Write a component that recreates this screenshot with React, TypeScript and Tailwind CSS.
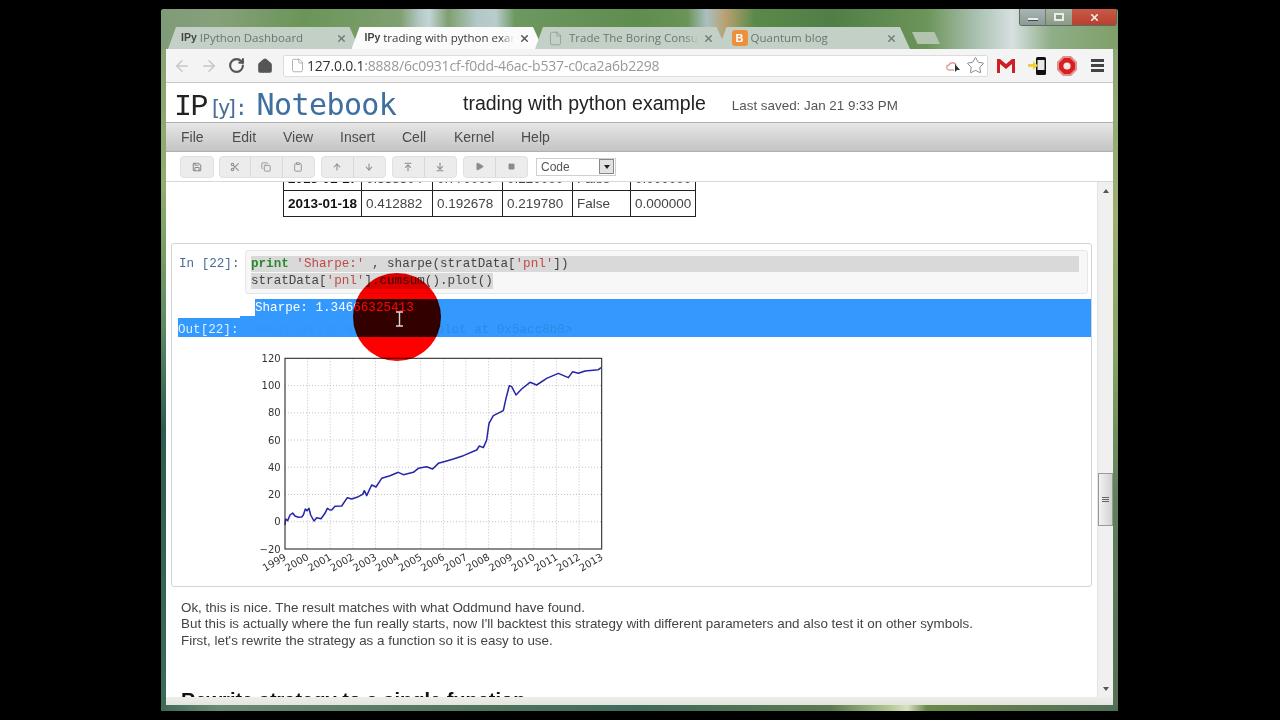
import { ArrowDown, ArrowLeft, ArrowRight, ArrowUp, Clipboard, Copy, File, Home, Play, RotateCw, Save, Scissors, Square, Star, X, ArrowUpToLine, ArrowDownToLine } from "lucide-react";

const tabs = [
  { title: "IPython Dashboard", active: false, icon: "ipy" },
  { title: "trading with python example", active: true, icon: "ipy" },
  { title: "Trade The Boring Consumer", active: false, icon: "file" },
  { title: "Quantum blog", active: false, icon: "blog" },
];

const menus = [
  { label: "File", w: "w-[51px]" },
  { label: "Edit", w: "w-[51px]" },
  { label: "View", w: "w-[57px]" },
  { label: "Insert", w: "w-[62px]" },
  { label: "Cell", w: "w-[52px]" },
  { label: "Kernel", w: "w-[67px]" },
  { label: "Help", w: "w-[50px]" },
];

const tableRows = [
  ["2013-01-17", "0.338504", "0.770000", "0.220000", "False", "0.000000"],
  ["2013-01-18", "0.412882", "0.192678", "0.219780", "False", "0.000000"],
];

const colWidths = ["w-[78px]", "w-[71px]", "w-[70px]", "w-[70px]", "w-[58px]", "w-[65px]"];

const years = ["1999", "2000", "2001", "2002", "2003", "2004", "2005", "2006", "2007", "2008", "2009", "2010", "2011", "2012", "2013"];
const yTicks = [120, 100, 80, 60, 40, 20, 0, -20];

// traced from the picture, in 3x plot coordinates
const pnlLine =
  "M105,540 L107,522 L113,527 L120,510 L128,504 L135,513 L145,517 L155,516 L160,510 L166,492 L171,497 L177,490 L182,510 L192,528 L200,518 L213,521 L225,505 L232,490 L238,494 L245,495 L255,484 L275,483 L292,458 L305,462 L325,455 L338,448 L343,437 L350,452 L365,420 L378,426 L395,400 L420,392 L445,382 L460,389 L490,382 L505,370 L530,365 L548,372 L565,355 L590,348 L610,342 L640,332 L680,315 L688,303 L700,308 L710,285 L717,235 L730,212 L760,197 L768,160 L778,122 L785,125 L798,150 L815,132 L840,112 L860,120 L890,100 L925,85 L955,98 L968,80 L985,85 L1005,78 L1045,74 L1053,68";

function Tab({ title, active, icon }: { title: string; active: boolean; icon: string }) {
  return (
    <div
      className={`w-[191.5px] h-[22px] -mr-[8px] flex items-center pl-[13px] pr-[13px] [clip-path:polygon(0_100%,8px_0,calc(100%-10px)_0,100%_100%)] ${
        active ? "bg-[#fbfbfb] text-[#3a3a3a]" : "bg-[#c3d0c6] text-[#6d756f]"
      }`}
    >
      {icon === "ipy" && <span className="text-[10.5px] font-bold text-[#444] mr-[3px]">IPy</span>}
      {icon === "file" && <File size={15} strokeWidth={1} className="text-[#888] mr-[6px] shrink-0" />}
      {icon === "blog" && (
        <span className="w-[16px] h-[16px] rounded-[3px] bg-[#ee8f3c] mr-[3px] shrink-0 flex items-center justify-center text-white text-[11px] font-bold">
          B
        </span>
      )}
      <span className="flex-1 whitespace-nowrap overflow-hidden text-[11.5px] font-['Open_Sans',sans-serif] [mask-image:linear-gradient(to_right,black_90%,transparent)]">
        {title}
      </span>
      <X size={11} strokeWidth={3} className={active ? "text-[#555] ml-[5px] shrink-0" : "text-[#777] ml-[5px] shrink-0"} />
    </div>
  );
}

function ToolButton({ children }: { children: React.ReactNode }) {
  return <div className="w-[31.5px] h-[20px] flex items-center justify-center text-[#8a8a8a] border-r border-[#d8d8d8] last:border-r-0">{children}</div>;
}

function ToolGroup({ children, ml }: { children: React.ReactNode; ml: string }) {
  return <div className={`${ml} flex rounded-[4px] border border-[#e0e0e0] bg-[#ececec]`}>{children}</div>;
}

function Plot() {
  return (
    <svg width="370" height="235" viewBox="0 0 1110 705" className="block ml-[78px] mt-[8px]">
      <rect x="105" y="40" width="950" height="572" fill="white" />
      {years.slice(1, -1).map((_, i) => {
        const x = 105 + (i + 1) * 67.86;
        return <line key={i} x1={x} x2={x} y1="40" y2="612" stroke="#b4b4b4" strokeWidth="2.4" strokeDasharray="3 6" />;
      })}
      {yTicks.slice(1, -1).map((t, i) => {
        const y = 40 + (i + 1) * 81.7;
        return <line key={t} x1="105" x2="1055" y1={y} y2={y} stroke="#b4b4b4" strokeWidth="2.4" strokeDasharray="3 6" />;
      })}
      <path d={pnlLine} fill="none" stroke="#2626a8" strokeWidth="4.6" strokeLinejoin="round" />
      <rect x="105" y="40" width="950" height="572" fill="none" stroke="#333" strokeWidth="3.4" />
      {yTicks.map((t, i) => (
        <text key={t} x="92" y={40 + i * 81.7 + 11} textAnchor="end" fontSize="30" fill="#333" fontFamily="'DejaVu Sans', sans-serif">
          {t < 0 ? `\u2212${-t}` : t}
        </text>
      ))}
      {years.map((y, i) => {
        const x = 105 + i * 67.86;
        return (
          <text key={y} x={x + 6} y="642" textAnchor="end" fontSize="30" fill="#333" fontFamily="'DejaVu Sans', sans-serif" transform={`rotate(-30 ${x + 6} 642)`}>
            {y}
          </text>
        );
      })}
    </svg>
  );
}

export default function App() {
  return (
    <div className="relative w-[1280px] h-[720px] bg-black overflow-hidden pl-[161px] pt-[9px] font-['Liberation_Sans',sans-serif]">
      <div className="w-[957px] h-[702px] px-[5px] flex flex-col rounded-t-[3px] [background:linear-gradient(#86a07a,#8fae6e_25%,#5f8a62_45%,#2f5c50_60%,#3f6a58_100%)_left/5px_100%_no-repeat,linear-gradient(#8aa47c,#9cb070_30%,#86a264_50%,#5f7f5a_70%,#566f56)_right/5px_100%_no-repeat]">
        {/* tab strip */}
        <div className="h-[40px] flex items-end shrink-0 -mx-[5px] pl-[7px] rounded-t-[3px] bg-[linear-gradient(90deg,#7f9c78_0%,#86a07a_6%,#6a9558_15%,#7fa070_25%,#b3c7c4_27%,#c3d4d6_28%,#7f9f70_30%,#b3c8c8_33%,#b9cccc_35%,#6d9860_37%,#5f8c4f_50%,#6a9458_55%,#a9c0c0_57%,#b8a070_59%,#5a8a4a_62%,#4f7f46_70%,#6c9458_80%,#a7bfae_85%,#d7e0e0_89%,#8fae88_93%,#7f9f68_100%)]">
          {tabs.map((t) => (
            <Tab key={t.title} {...t} />
          ))}
          <div className="ml-[10px] mb-[5px] w-[28px] h-[12px] bg-[#b3c4ae] [clip-path:polygon(0_0,80%_0,100%_100%,20%_100%)]" />
        </div>

        {/* chrome toolbar */}
        <div className="h-[34px] shrink-0 flex items-center bg-[#f4f4f4] border-b border-[#c8c8c8] pl-[7px]">
          <ArrowLeft size={18} strokeWidth={2} className="text-[#c4c8cc]" />
          <ArrowRight size={18} strokeWidth={2} className="text-[#c4c8cc] ml-[9px]" />
          <RotateCw size={17} strokeWidth={3} className="text-[#555] ml-[10px]" />
          <Home size={16} strokeWidth={2.5} className="text-[#555] fill-[#555] ml-[12px]" />
          <div className="ml-[10px] w-[705px] h-[22px] flex items-center bg-white border border-[#dcdcdc] rounded-[2px] pl-[6px] pr-[2px]">
            <File size={15} strokeWidth={1.2} className="text-[#999] shrink-0" />
            <span className="ml-[2px] text-[14px] font-['Open_Sans',sans-serif] tracking-[-0.2px] whitespace-nowrap text-[#999]">
              <span className="text-[#333]">127.0.0.1</span>:8888/6c0931cf-f0dd-46ac-b537-c0ca2a6b2298
            </span>
            <div className="flex-1" />
            <svg width="16" height="14" viewBox="0 0 16 14" className="mr-[5px]">
              <path d="M4 11 C1 11 1 6 4 6 C5 3 10 3 11 6" fill="none" stroke="#e09a96" strokeWidth="1.3" />
              <path d="M4 11 H9" stroke="#e09a96" strokeWidth="1.3" />
              <path d="M10 5 L10 13 L12 11 L15 11 Z" fill="#333" />
            </svg>
            <Star size={19} strokeWidth={1.1} className="text-[#777]" />
          </div>
          <svg width="18" height="14" viewBox="0 0 18 14" className="ml-[9px]">
            <path d="M0 0 H3 L9 5 L15 0 H18 V14 H15 V5 L9 10 L3 5 V14 H0 Z" fill="#cc1f26" />
          </svg>
          <svg width="22" height="18" viewBox="0 0 22 18" className="ml-[12px]">
            <rect x="9" y="0" width="10" height="18" rx="1.5" fill="#111" />
            <rect x="10.5" y="3" width="7" height="10" fill="#e8e8e8" />
            <path d="M1 7 H6 V4 L11 8.5 L6 13 V10 H1 Z" fill="#eed33e" />
          </svg>
          <svg width="20" height="20" viewBox="0 0 20 20" className="ml-[8px]">
            <polygon points="6,0 14,0 20,6 20,14 14,20 6,20 0,14 0,6" fill="#e09090" />
            <polygon points="7,2 13,2 18,7 18,13 13,18 7,18 2,13 2,7" fill="#d82020" />
            <circle cx="10" cy="10" r="3.6" fill="#f8e8e8" />
          </svg>
          <div className="ml-[14px] w-[13px] flex flex-col gap-[2px]">
            <div className="h-[3px] bg-[#444]" />
            <div className="h-[3px] bg-[#444]" />
            <div className="h-[3px] bg-[#444]" />
          </div>
        </div>

        {/* notebook header */}
        <div className="h-[39px] shrink-0 flex items-start bg-white pl-[8px]">
          <div className="mt-[7px] w-[289px] flex items-baseline">
            <span className="text-[30px] leading-none font-['Liberation_Mono',monospace] tracking-[-1.5px] text-[#222]">IP</span>
            <span className="ml-[2px] text-[21px] leading-none font-['DejaVu_Sans_Mono',monospace] tracking-[-4px] text-[#4a6f96]">[y]:</span>
            <span className="ml-[13px] text-[30px] leading-none font-['DejaVu_Sans_Mono',monospace] tracking-[-0.6px] text-[#3f6f9f]">Notebook</span>
          </div>
          <div className="mt-[11px] flex items-baseline">
            <span className="text-[19.5px] leading-none text-[#222]">trading with python example</span>
            <span className="ml-[26px] text-[13.4px] leading-none text-[#555]">Last saved: Jan 21 9:33 PM</span>
          </div>
        </div>

        {/* menu bar */}
        <div className="h-[30px] shrink-0 flex items-center pl-[15px] border-y border-[#b0b0b0] bg-[linear-gradient(#e6e6e6,#c4c4c4)] text-[14px] text-[#4c4c4c]">
          {menus.map((m) => (
            <span key={m.label} className={m.w}>
              {m.label}
            </span>
          ))}
        </div>

        {/* notebook toolbar */}
        <div className="h-[30px] shrink-0 flex items-center bg-white border-b border-[#d8d8d8] pl-[14px]">
          <ToolGroup ml="">
            <ToolButton><Save size={10} strokeWidth={2.5} /></ToolButton>
          </ToolGroup>
          <ToolGroup ml="ml-[5px]">
            <ToolButton><Scissors size={10} strokeWidth={2.5} /></ToolButton>
            <ToolButton><Copy size={10} strokeWidth={2} /></ToolButton>
            <ToolButton><Clipboard size={10} strokeWidth={2} /></ToolButton>
          </ToolGroup>
          <ToolGroup ml="ml-[6px]">
            <ToolButton><ArrowUp size={10} strokeWidth={2.5} /></ToolButton>
            <ToolButton><ArrowDown size={10} strokeWidth={2.5} /></ToolButton>
          </ToolGroup>
          <ToolGroup ml="ml-[6px]">
            <ToolButton><ArrowUpToLine size={10} strokeWidth={2.5} /></ToolButton>
            <ToolButton><ArrowDownToLine size={10} strokeWidth={2.5} /></ToolButton>
          </ToolGroup>
          <ToolGroup ml="ml-[6px]">
            <ToolButton><Play size={9} fill="currentColor" /></ToolButton>
            <ToolButton><Square size={7} fill="currentColor" /></ToolButton>
          </ToolGroup>
          <div className="ml-[8px] w-[80px] h-[18px] flex items-center justify-between border border-[#cfcfcf] bg-white pl-[4px] pr-[1px] text-[12px] text-[#555]">
            Code
            <div className="w-[15px] h-[15px] flex items-center justify-center border border-[#888] bg-[#e2e2e2]">
              <div className="w-0 h-0 border-x-[3px] border-x-transparent border-t-[4px] border-t-[#222]" />
            </div>
          </div>
        </div>

        {/* page */}
        <div className="flex-1 min-h-0 flex bg-white">
          <div className="flex-1 min-w-0 overflow-hidden pl-[5px]">
            <table className="-mt-[18px] ml-[112px] border-collapse text-[13.5px] text-[#444]">
              <tbody>
                {tableRows.map((row, r) => (
                  <tr key={row[0]} className="h-[26px]">
                    {row.map((c, i) => (
                      <td key={i} className={`${colWidths[i]} border border-[#222] p-0 pl-[4px] ${r === 0 ? "pt-[4px]" : "pt-[1px]"} ${i === 0 ? "font-bold text-[#111]" : ""}`}>
                        {c}
                      </td>
                    ))}
                  </tr>
                ))}
              </tbody>
            </table>

            {/* code cell */}
            <div className="mt-[26px] w-[921px] h-[344px] rounded-[3px] border border-[#d4d4d4] pt-[6px] font-['Liberation_Mono',monospace] text-[12.6px] leading-[16px]">
              <div className="flex pl-[7px]">
                <div className="w-[66px] pt-[6px] text-[#4a6a96]">In&nbsp;[22]:</div>
                <div className="w-[843px] h-[44px] rounded-[3px] border border-[#e6e6e6] bg-[#f7f7f7] pt-[5px] pl-[5px] pr-[8px]">
                  <div className="bg-[#d9d9d9] h-[16px] mb-px whitespace-pre text-[#444]">
                    <span className="text-[#2a8a2a] font-bold">print</span> <span className="text-[#c04a4a]">'Sharpe:'</span> , sharpe(stratData[<span className="text-[#c04a4a]">'pnl'</span>])
                  </div>
                  <div className="bg-[#d9d9d9] h-[16px] w-fit whitespace-pre text-[#444]">
                    stratData[<span className="text-[#c04a4a]">'pnl'</span>].cumsum().plot()
                  </div>
                </div>
              </div>
              <div className="mt-[5px] ml-[83px] h-[17px] bg-[#3399ff] text-white whitespace-pre leading-[18px]">Sharpe: 1.34666325413</div>
              <div className="ml-[68px] h-[2px] bg-[#3399ff]" />
              <div className="ml-[6px] h-[19px] bg-[#3399ff] flex whitespace-pre leading-[24px]">
                <span className="w-[77px] text-[#dbeeff]">Out[22]:</span>
                <span className="text-[#3296fa]">
                  &lt;matplotlib.axes.AxesSub<span className="text-[#2c8ae6]">plot at 0x5acc8b0&gt;</span>
                </span>
              </div>
              <Plot />
            </div>

            {/* markdown */}
            <div className="mt-[13px] pl-[10px] text-[13.4px] leading-[16.4px] text-[#444]">
              <p>Ok, this is nice. The result matches with what Oddmund have found.</p>
              <p>But this is actually where the fun really starts, now I'll backtest this strategy with different parameters and also test it on other symbols.</p>
              <p>First, let's rewrite the strategy as a function so it is easy to use.</p>
              <h2 className="mt-[39px] text-[20px] font-bold text-[#111] leading-[24px] whitespace-nowrap">Rewrite strategy to a single function</h2>
            </div>
          </div>

          {/* scrollbar */}
          <div className="w-[16px] shrink-0 flex flex-col bg-[#f0f0f0] border-l border-[#e4e4e4]">
            <div className="h-[17px] flex items-center justify-center">
              <div className="w-0 h-0 border-x-[3px] border-x-transparent border-b-[4px] border-b-[#555]" />
            </div>
            <div className="flex-1 min-h-0 pt-[274px]">
              <div className="h-[53px] flex flex-col items-center justify-center gap-[1px] border border-[#999] bg-[linear-gradient(90deg,#f2f2f2,#d2d2d2)]">
                <div className="w-[7px] h-px bg-[#666]" />
                <div className="w-[7px] h-px bg-[#666]" />
                <div className="w-[7px] h-px bg-[#666]" />
              </div>
            </div>
            <div className="h-[17px] flex items-center justify-center">
              <div className="w-0 h-0 border-x-[3px] border-x-transparent border-t-[4px] border-t-[#555]" />
            </div>
          </div>
        </div>

        {/* bottom edge of the window */}
        <div className="h-[8px] shrink-0 bg-[linear-gradient(#eceeea,#e2e4e0)]" />
        <div className="h-[6px] shrink-0 -mx-[5px] rounded-b-[2px] bg-[linear-gradient(90deg,#3f6a58_0%,#6a8a72_6%,#587a60_25%,#3f6a5a_50%,#5c7a50_70%,#b0c890_76%,#d8e0c0_78%,#6a8a4a_80%,#5f7a50_90%,#4f6f56_100%)]" />
      </div>

      {/* window controls */}
      <div className="absolute left-[1019px] top-[9px] w-[98px] h-[17px] flex rounded-b-[3px] border border-t-0 border-[#5a6a66] overflow-hidden">
        <div className="w-[26px] flex items-center justify-center bg-[linear-gradient(#a7b6b4,#8a9a94)] border-r border-[#6a7a74]"><div className="w-[10px] h-[3px] mt-[4px] bg-[#e8ecec] border-b border-[#444]" /></div>
        <div className="w-[26px] flex items-center justify-center bg-[linear-gradient(#a7b6a4,#8a9a84)]"><div className="w-[10px] h-[8px] border-2 border-[#e8ecec] bg-[#8a9a84]" /></div>
        <div className="flex-1 flex items-center justify-center bg-[linear-gradient(#c85a48,#b8402e)] text-[#f4f0ee]"><X size={11} strokeWidth={3.5} /></div>
      </div>

      {/* recording cursor highlight */}
      <div className="absolute left-[353px] top-[273px] w-[88px] h-[88px] rounded-full bg-[#ff0000] mix-blend-multiply" />
      <svg width="9" height="16" viewBox="0 0 9 16" className="absolute left-[395px] top-[311px]">
        <path d="M1 1 H8 M4.5 1 V15 M1 15 H8" stroke="#d8d8d8" strokeWidth="1.4" fill="none" />
      </svg>
    </div>
  );
}
